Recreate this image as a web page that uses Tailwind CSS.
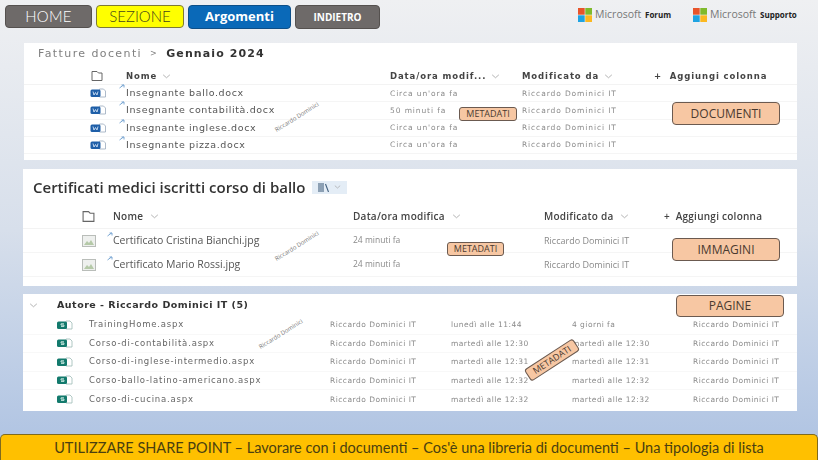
<!DOCTYPE html>
<html lang="it">
<head>
  <meta charset="UTF-8">
  <title>Utilizzare SharePoint</title>
  <script src="https://cdn.jsdelivr.net/npm/@tailwindcss/browser@4"></script>
</head>
<body class="w-[818px] h-[460px] overflow-hidden relative flex flex-col bg-linear-to-b from-[#eff0f2] via-[#d7dfeb] to-[#adc2e2] font-['Liberation_Sans',sans-serif]">
  <svg class="hidden">
    <symbol id="word" viewBox="0 0 16 10">
      <path d="M9 1h4l2 2v6H9z" fill="#fff" stroke="#9aa9bd" stroke-width=".8"/>
      <rect x="0" y="1.500" width="10" height="7.500" rx="1.500" fill="#1f5fa8"/>
      <path d="M2.500 3.500l1 3.500 1.500-2.500 1.500 2.500 1-3.500" fill="none" stroke="#cfe1f5" stroke-width=".9"/>
    </symbol>
    <symbol id="sp" viewBox="0 0 16 10">
      <path d="M9 1h4l2 2v6H9z" fill="#fff" stroke="#9dbab5" stroke-width=".8"/>
      <rect x="0" y="1.500" width="10" height="7.500" rx="1.500" fill="#137a6d"/>
      <path d="M7 3.800H4v1.300h3v1.300H4" fill="none" stroke="#d5efe9" stroke-width=".9"/>
    </symbol>
    <symbol id="pic" viewBox="0 0 14 12">
      <rect x=".5" y=".5" width="13" height="11" fill="#eef0ee" stroke="#b9bdb9"/>
      <path d="M2 10l3-4 2 2 2-3 3 5z" fill="#b5c9a8"/>
    </symbol>
    <symbol id="file" viewBox="0 0 12 12">
      <path d="M1 1.500h5l1.500 1.500h3.500v7.500H1z" fill="none" stroke="#666" stroke-width="1"/>
    </symbol>
    <symbol id="chev" viewBox="0 0 10 6">
      <path d="M1 1l4 3.500L9 1" fill="none" stroke="#9a9a9a" stroke-width=".9"/>
    </symbol>
    <symbol id="nw" viewBox="0 0 6 5">
      <path d="M.5 4L4.500 1M2.500 1h2.500v2.500" fill="none" stroke="#5b93c9" stroke-width=".8"/>
    </symbol>
    <symbol id="ms" viewBox="0 0 14 14">
      <rect width="6.700" height="6.700" fill="#e8542a"/>
      <rect x="7.300" width="6.700" height="6.700" fill="#7fba2c"/>
      <rect y="7.300" width="6.700" height="6.700" fill="#1ea3e2"/>
      <rect x="7.300" y="7.300" width="6.700" height="6.700" fill="#fbb820"/>
    </symbol>
  </svg>

  <!-- Barra superiore -->
  <div class="h-[43px] shrink-0 flex items-start pt-[5px] pl-[5px]">
    <div class="w-[87px] h-[23px] mr-[4px] flex items-center justify-center rounded-[4px] bg-[#6e6a69] border border-[#55514f] text-white text-[15px] font-['Lato',sans-serif] font-light tracking-[0.2px]">HOME</div>
    <div class="w-[88px] h-[23px] mr-[4px] flex items-center justify-center rounded-[4px] bg-[#ffff00] border border-[#7d7a35] text-[#44441c] text-[15px] font-['Lato',sans-serif] font-light">SEZIONE</div>
    <div class="w-[103px] h-[24px] mr-[4px] flex items-center justify-center rounded-[4px] bg-[#0a69b8] border border-[#0d4f88] text-white text-[13px] font-['Open_Sans',sans-serif] font-bold">Argomenti</div>
    <div class="w-[85px] h-[24px] flex items-center justify-center rounded-[4px] bg-[#6e6a69] border border-[#55514f] text-white text-[10px] font-['Open_Sans',sans-serif] font-bold">INDIETRO</div>
    <div class="ml-[198px] mt-[3px] flex items-center w-[220px] h-[14px]">
      <svg class="w-[14px] h-[14px] mr-[3px]"><use href="#ms"/></svg>
      <span class="w-[50px] text-[10.500px] text-[#777] font-['Open_Sans',sans-serif]">Microsoft</span>
      <span class="w-[48px] text-[8px] font-['Open_Sans',sans-serif] font-bold text-[#222]">Forum</span>
      <svg class="w-[14px] h-[14px] mr-[3px]"><use href="#ms"/></svg>
      <span class="w-[50px] text-[10.500px] text-[#777] font-['Open_Sans',sans-serif]">Microsoft</span>
      <span class="text-[8px] font-['Open_Sans',sans-serif] font-bold text-[#222]">Supporto</span>
    </div>
  </div>

  <!-- Documenti -->
  <section class="ml-[24px] w-[773px] h-[117px] shrink-0 bg-white font-['DejaVu_Sans',sans-serif] blur-[0.35px]">
    <div class="h-[25px] pl-[14px] pb-[3px] flex items-center text-[11px] tracking-[1.400px] text-[#808080]">
      Fatture docenti<span class="mx-[8px] text-[8px]">&gt;</span><b class="text-[#333] font-semibold tracking-[1.100px]">Gennaio 2024</b>
    </div>
    <div class="h-[17px] grid grid-cols-[102px_264px_132px_132px_1fr] items-center border-b border-[#f3f3f3] text-[8.500px] tracking-[0.900px] text-[#444] font-semibold">
      <svg class="ml-[67px] w-[12px] h-[12px]"><use href="#file"/></svg>
      <div class="flex items-center">Nome<svg class="ml-[5px] w-[9px] h-[5px]"><use href="#chev"/></svg></div>
      <div class="flex items-center">Data/ora modif...<svg class="ml-[5px] w-[9px] h-[5px]"><use href="#chev"/></svg></div>
      <div class="flex items-center">Modificato da<svg class="ml-[5px] w-[9px] h-[5px]"><use href="#chev"/></svg></div>
      <div>+ &nbsp;Aggiungi colonna</div>
    </div>
    <div class="h-[17.300px] grid grid-cols-[102px_264px_132px_1fr] items-center border-b border-[#f5f5f5] text-[7.500px] tracking-[0.900px] text-[#8a8a8a]">
      <svg class="ml-[66px] w-[17px] h-[10px]"><use href="#word"/></svg>
      <div class="relative text-[9.500px] tracking-[0.630px] text-[#555]"><svg class="absolute -left-[7px] -top-[2px] w-[6px] h-[5px]"><use href="#nw"/></svg>Insegnante ballo.docx</div><div>Circa un'ora fa</div><div>Riccardo Dominici IT</div>
    </div>
    <div class="h-[17.300px] grid grid-cols-[102px_264px_132px_1fr] items-center border-b border-[#f5f5f5] text-[7.500px] tracking-[0.900px] text-[#8a8a8a]">
      <svg class="ml-[66px] w-[17px] h-[10px]"><use href="#word"/></svg>
      <div class="relative text-[9.500px] tracking-[0.630px] text-[#555]"><svg class="absolute -left-[7px] -top-[2px] w-[6px] h-[5px]"><use href="#nw"/></svg>Insegnante contabilità.docx</div><div>50 minuti fa</div><div>Riccardo Dominici IT</div>
    </div>
    <div class="h-[17.300px] grid grid-cols-[102px_264px_132px_1fr] items-center border-b border-[#f5f5f5] text-[7.500px] tracking-[0.900px] text-[#8a8a8a]">
      <svg class="ml-[66px] w-[17px] h-[10px]"><use href="#word"/></svg>
      <div class="relative text-[9.500px] tracking-[0.630px] text-[#555]"><svg class="absolute -left-[7px] -top-[2px] w-[6px] h-[5px]"><use href="#nw"/></svg>Insegnante inglese.docx</div><div>Circa un'ora fa</div><div>Riccardo Dominici IT</div>
    </div>
    <div class="h-[17.300px] grid grid-cols-[102px_264px_132px_1fr] items-center border-b border-[#f5f5f5] text-[7.500px] tracking-[0.900px] text-[#8a8a8a]">
      <svg class="ml-[66px] w-[17px] h-[10px]"><use href="#word"/></svg>
      <div class="relative text-[9.500px] tracking-[0.630px] text-[#555]"><svg class="absolute -left-[7px] -top-[2px] w-[6px] h-[5px]"><use href="#nw"/></svg>Insegnante pizza.docx</div><div>Circa un'ora fa</div><div>Riccardo Dominici IT</div>
    </div>
  </section>

  <!-- Immagini -->
  <section class="ml-[23px] mt-[9px] w-[774px] h-[117px] shrink-0 bg-white font-['Open_Sans',sans-serif] blur-[0.35px]">
    <div class="h-[36px] pl-[10px] flex items-center text-[15px] font-semibold text-[#333]">
      Certificati medici iscritti corso di ballo
      <span class="ml-[7px] w-[35px] h-[13px] bg-[#e4edf6] flex items-center justify-center gap-[3px]">
        <svg class="w-[13px] h-[9px]" viewBox="0 0 13 9"><path d="M1 0v9M3 0v9M5 0v9M7.500 1l3 8" stroke="#44617f" stroke-width="1.100" fill="none"/></svg>
        <svg class="w-[7px] h-[4px]"><use href="#chev"/></svg>
      </span>
    </div>
    <div class="h-[24px] grid grid-cols-[90px_240px_191px_120px_1fr] items-center border-b border-[#f3f3f3] text-[10px] tracking-[0.250px] text-[#444] font-semibold">
      <svg class="ml-[59px] w-[13px] h-[13px]"><use href="#file"/></svg>
      <div class="flex items-center">Nome<svg class="ml-[7px] w-[9px] h-[5px]"><use href="#chev"/></svg></div>
      <div class="flex items-center">Data/ora modifica<svg class="ml-[7px] w-[9px] h-[5px]"><use href="#chev"/></svg></div>
      <div class="flex items-center">Modificato da<svg class="ml-[7px] w-[9px] h-[5px]"><use href="#chev"/></svg></div>
      <div>+ &nbsp;Aggiungi colonna</div>
    </div>
    <div class="h-[24px] grid grid-cols-[90px_240px_191px_1fr] items-center border-b border-[#f5f5f5] text-[8.500px] text-[#8a8a8a]">
      <svg class="ml-[59px] w-[14px] h-[12px]"><use href="#pic"/></svg>
      <div class="relative text-[10.500px] text-[#555]"><svg class="absolute -left-[6px] -top-[1px] w-[6px] h-[5px]"><use href="#nw"/></svg>Certificato Cristina Bianchi.jpg</div><div>24 minuti fa</div><div class="text-[9px]">Riccardo Dominici IT</div>
    </div>
    <div class="h-[24px] grid grid-cols-[90px_240px_191px_1fr] items-center border-b border-[#f5f5f5] text-[8.500px] text-[#8a8a8a]">
      <svg class="ml-[59px] w-[14px] h-[12px]"><use href="#pic"/></svg>
      <div class="relative text-[10.500px] text-[#555]"><svg class="absolute -left-[6px] -top-[1px] w-[6px] h-[5px]"><use href="#nw"/></svg>Certificato Mario Rossi.jpg</div><div>24 minuti fa</div><div class="text-[9px]">Riccardo Dominici IT</div>
    </div>
  </section>

  <!-- Pagine -->
  <section class="ml-[23px] mt-[8px] w-[774px] h-[117px] shrink-0 bg-white font-['DejaVu_Sans',sans-serif] blur-[0.35px]">
    <div class="h-[22px] flex items-center text-[9.500px] tracking-[0.500px] font-semibold text-[#333]">
      <svg class="ml-[6px] mr-[19px] w-[9px] h-[5px]"><use href="#chev"/></svg>
      Autore - Riccardo Dominici IT (5)
    </div>
    <div class="h-[18.500px] grid grid-cols-[66px_241px_121px_121px_121px_1fr] items-center border-b border-[#f8f8f8] text-[7.500px] tracking-[0.480px] text-[#8a8a8a]">
      <svg class="ml-[34px] w-[16px] h-[10px]"><use href="#sp"/></svg>
      <div class="text-[8.500px] tracking-[0.800px] text-[#666]">TrainingHome.aspx</div><div>Riccardo Dominici IT</div><div>lunedì alle 11:44</div><div>4 giorni fa</div><div>Riccardo Dominici IT</div>
    </div>
    <div class="h-[18.500px] grid grid-cols-[66px_241px_121px_121px_121px_1fr] items-center border-b border-[#f8f8f8] text-[7.500px] tracking-[0.480px] text-[#8a8a8a]">
      <svg class="ml-[34px] w-[16px] h-[10px]"><use href="#sp"/></svg>
      <div class="text-[8.500px] tracking-[0.800px] text-[#666]">Corso-di-contabilità.aspx</div><div>Riccardo Dominici IT</div><div>martedì alle 12:30</div><div>martedì alle 12:30</div><div>Riccardo Dominici IT</div>
    </div>
    <div class="h-[18.500px] grid grid-cols-[66px_241px_121px_121px_121px_1fr] items-center border-b border-[#f8f8f8] text-[7.500px] tracking-[0.480px] text-[#8a8a8a]">
      <svg class="ml-[34px] w-[16px] h-[10px]"><use href="#sp"/></svg>
      <div class="text-[8.500px] tracking-[0.800px] text-[#666]">Corso-di-inglese-intermedio.aspx</div><div>Riccardo Dominici IT</div><div>martedì alle 12:31</div><div>martedì alle 12:31</div><div>Riccardo Dominici IT</div>
    </div>
    <div class="h-[18.500px] grid grid-cols-[66px_241px_121px_121px_121px_1fr] items-center border-b border-[#f8f8f8] text-[7.500px] tracking-[0.480px] text-[#8a8a8a]">
      <svg class="ml-[34px] w-[16px] h-[10px]"><use href="#sp"/></svg>
      <div class="text-[8.500px] tracking-[0.800px] text-[#666]">Corso-ballo-latino-americano.aspx</div><div>Riccardo Dominici IT</div><div>martedì alle 12:32</div><div>martedì alle 12:32</div><div>Riccardo Dominici IT</div>
    </div>
    <div class="h-[18.500px] grid grid-cols-[66px_241px_121px_121px_121px_1fr] items-center text-[7.500px] tracking-[0.480px] text-[#8a8a8a]">
      <svg class="ml-[34px] w-[16px] h-[10px]"><use href="#sp"/></svg>
      <div class="text-[8.500px] tracking-[0.800px] text-[#666]">Corso-di-cucina.aspx</div><div>Riccardo Dominici IT</div><div>martedì alle 12:32</div><div>martedì alle 12:32</div><div>Riccardo Dominici IT</div>
    </div>
  </section>

  <!-- Titolo in basso -->
  <div class="mt-auto h-[26px] shrink-0 flex items-center justify-center rounded-t-[5px] bg-[#ffc000] border border-b-0 border-[#7f6a1e] text-[#4a3f10] text-[14.500px] font-['Lato',sans-serif]">UTILIZZARE SHARE POINT – Lavorare con i documenti – Cos'è una libreria di documenti – Una tipologia di lista</div>

  <!-- Etichette sovrapposte -->
  <div class="absolute left-[459px] top-[107px] w-[58px] h-[14px] flex items-center justify-center rounded-[3px] bg-[#f7c7a3] border border-[#6b5a50] text-[9px] text-[#4a3a30] font-['Open_Sans',sans-serif]">METADATI</div>
  <div class="absolute left-[672px] top-[102px] w-[108px] h-[23px] flex items-center justify-center rounded-[4px] bg-[#f7c7a3] border border-[#6b5a50] text-[12px] text-[#4a3a30] font-['Open_Sans',sans-serif]">DOCUMENTI</div>
  <div class="absolute left-[447px] top-[242px] w-[57px] h-[14px] flex items-center justify-center rounded-[3px] bg-[#f7c7a3] border border-[#6b5a50] text-[9px] text-[#4a3a30] font-['Open_Sans',sans-serif]">METADATI</div>
  <div class="absolute left-[672px] top-[238px] w-[108px] h-[23px] flex items-center justify-center rounded-[4px] bg-[#f7c7a3] border border-[#6b5a50] text-[12px] text-[#4a3a30] font-['Open_Sans',sans-serif]">IMMAGINI</div>
  <div class="absolute left-[676px] top-[295px] w-[108px] h-[22px] flex items-center justify-center rounded-[4px] bg-[#f7c7a3] border border-[#6b5a50] text-[12px] text-[#4a3a30] font-['Open_Sans',sans-serif]">PAGINE</div>
  <div class="absolute left-[523px] top-[353px] w-[58px] h-[14px] -rotate-[33deg] flex items-center justify-center rounded-[3px] bg-[#f7c7a3] border border-[#6b5a50] text-[9px] text-[#4a3a30] font-['Open_Sans',sans-serif]">METADATI</div>
  <div class="absolute left-[272px] top-[113px] -rotate-[32deg] text-[6px] text-[#777] font-['Open_Sans',sans-serif]">Riccardo Dominici</div>
  <div class="absolute left-[272px] top-[242px] -rotate-[32deg] text-[6px] text-[#777] font-['Open_Sans',sans-serif]">Riccardo Dominici</div>
  <div class="absolute left-[256px] top-[330px] -rotate-[32deg] text-[6px] text-[#777] font-['Open_Sans',sans-serif]">Riccardo Dominici</div>
</body>
</html>
